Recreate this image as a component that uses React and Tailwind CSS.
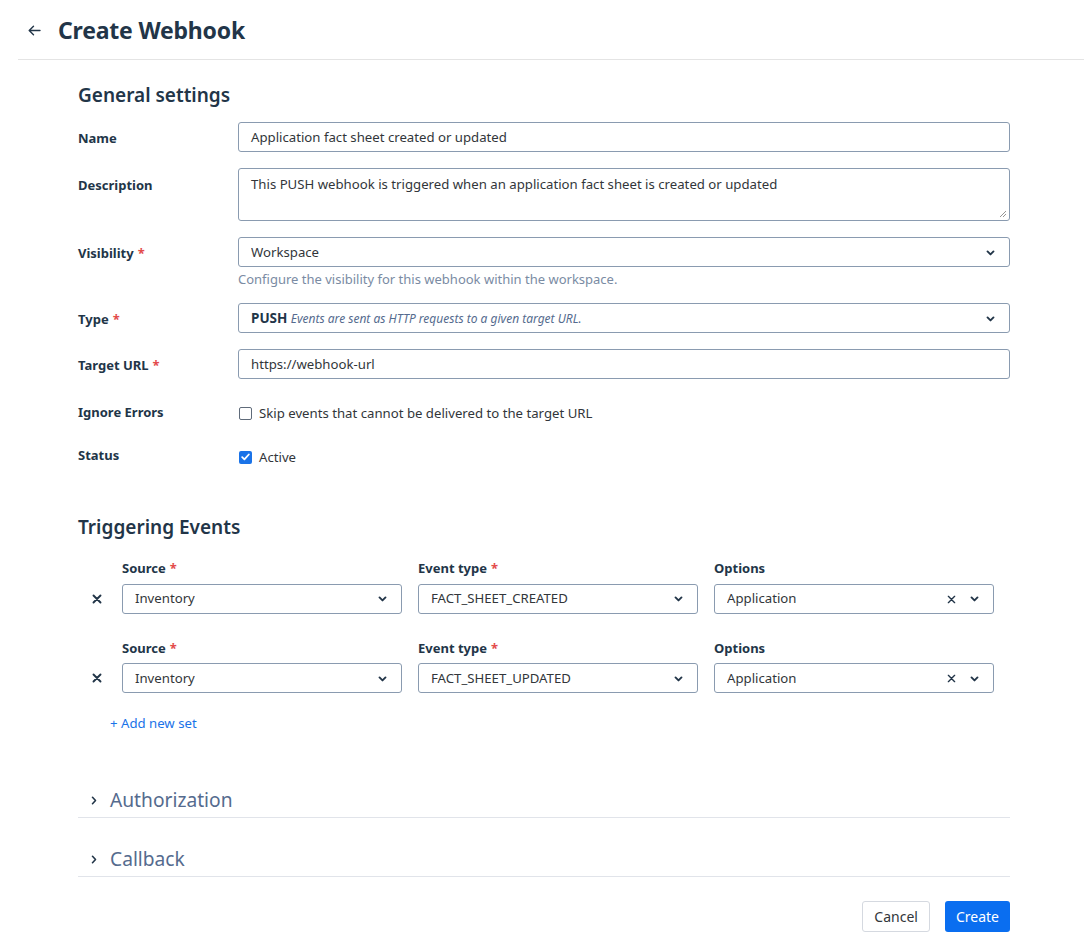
import React from 'react'

const Chevron = ({ className = '' }) => (
  <svg width="9" height="6" viewBox="0 0 9 6" className={className}>
    <path d="M1.5 1.4 4.5 4.4 7.5 1.4" fill="none" stroke="#223548" strokeWidth="1.9" strokeLinecap="round" strokeLinejoin="round" />
  </svg>
)

const Cross = ({ size = 10, width = 1.8 }) => (
  <svg width={size} height={size} viewBox="0 0 10 10">
    <path d="M1.5 1.5 8.5 8.5 M8.5 1.5 1.5 8.5" stroke="#223548" strokeWidth={width} strokeLinecap="round" />
  </svg>
)

const Req = () => <span className="text-[#e34b4b] ml-[4px]">*</span>

const Label = ({ children, required, className = 'pt-[7px]' }) => (
  <div className={`w-[160px] shrink-0 text-[13px] font-bold text-[#223548] ${className}`}>
    {children}
    {required && <Req />}
  </div>
)

const boxCls =
  'h-[30px] border border-[#8a9bb0] rounded-[3px] bg-white flex items-center px-[12px] pt-[1px] text-[13.2px] text-[#32363a]'

const Select = ({ children, className = '', clear }) => (
  <div className={`${boxCls} justify-between ${className}`}>
    <div className="truncate">{children}</div>
    <div className="flex items-center gap-[14px] pr-[2px]">
      {clear && <Cross size={9} width={1.5} />}
      <Chevron />
    </div>
  </div>
)

const EventSet = ({ eventType, first }) => (
  <div className={first ? '' : 'mt-[25px]'}>
    <div className="flex gap-[16px] pl-[44px] text-[13px] font-bold text-[#223548] mb-[5px]">
      <div className="w-[280px]">
        Source<Req />
      </div>
      <div className="w-[280px]">
        Event type<Req />
      </div>
      <div className="w-[280px]">Options</div>
    </div>
    <div className="flex items-center">
      <div className="w-[44px] flex justify-center pr-[6px]">
        <Cross size={10} width={1.9} />
      </div>
      <div className="flex gap-[16px]">
        <Select className="w-[280px]">Inventory</Select>
        <Select className="w-[280px]">{eventType}</Select>
        <Select className="w-[280px]" clear>Application</Select>
      </div>
    </div>
  </div>
)

const Collapsible = ({ title }) => (
  <div className="h-[59px] border-b border-[#e1e4ea] flex items-end pb-[2px]">
    <div className="flex items-center">
      <div className="w-[32px] flex justify-center">
        <svg width="6" height="9" viewBox="0 0 6 9">
          <path d="M1.5 1.3 4.5 4.5 1.5 7.7" fill="none" stroke="#223548" strokeWidth="1.6" strokeLinecap="round" strokeLinejoin="round" />
        </svg>
      </div>
      <span className="text-[19.2px] text-[#556b8e]">{title}</span>
    </div>
  </div>
)

export default function App() {
  return (
    <div className="min-h-screen bg-white font-['Noto_Sans',sans-serif] text-[#223548]">
      <header className="ml-[18px] h-[60px] border-b border-[#e4e4e4] flex items-center pt-[4px]">
        <div className="w-[40px] flex justify-center pr-[8px] pb-[2px]">
          <svg width="13" height="11" viewBox="0 0 13 11">
            <path d="M12 5.5H1.5 M5.5 1.2 1.2 5.5 5.5 9.8" fill="none" stroke="#223548" strokeWidth="1.4" strokeLinecap="round" strokeLinejoin="round" />
          </svg>
        </div>
        <h1 className="text-[23px] font-bold text-[#223548] tracking-[-0.2px] pb-[2px]">Create Webhook</h1>
      </header>

      <main className="ml-[78px] w-[932px]">
        <h2 className="text-[19px] font-semibold mt-[21px] mb-[13px] leading-[28px]">General settings</h2>

        <div className="flex items-start">
          <Label>Name</Label>
          <div className={`${boxCls} flex-1`}>Application fact sheet created or updated</div>
        </div>

        <div className="flex items-start mt-[16px]">
          <Label className="pt-[8px]">Description</Label>
          <div className="flex-1 relative h-[53px] border border-[#8a9bb0] rounded-[3px] px-[12px] pt-[6px] text-[13.2px] text-[#32363a]">
            This PUSH webhook is triggered when an application fact sheet is created or updated
            <svg width="8" height="8" viewBox="0 0 8 8" className="absolute right-[2px] bottom-[2px]">
              <path d="M7 1 1 7 M7 4 4 7" stroke="#8a8a8a" strokeWidth="0.9" />
            </svg>
          </div>
        </div>

        <div className="flex items-start mt-[16px]">
          <Label required>Visibility</Label>
          <Select className="flex-1">Workspace</Select>
        </div>
        <div className="pl-[160px] text-[13px] text-[#7a8ba3] mt-[3px] leading-[18px]">
          Configure the visibility for this webhook within the workspace.
        </div>

        <div className="flex items-start mt-[15px]">
          <Label required>Type</Label>
          <Select className="flex-1">
            <span className="font-bold text-[#223548] text-[13.5px]">PUSH</span>{' '}
            <span className="italic text-[12px] text-[#556b8e]">Events are sent as HTTP requests to a given target URL.</span>
          </Select>
        </div>

        <div className="flex items-start mt-[16px]">
          <Label required>Target URL</Label>
          <div className={`${boxCls} flex-1`}>https://webhook-url</div>
        </div>

        <div className="flex items-center mt-[21px] h-[24px]">
          <Label className="pt-[1px]">Ignore Errors</Label>
          <div className="flex items-center text-[13.2px] text-[#32363a] pt-[3px]">
            <span className="w-[13px] h-[13px] border border-[#5f6b7a] rounded-[2px] ml-[1px] mr-[7px]" />
            Skip events that cannot be delivered to the target URL
          </div>
        </div>

        <div className="flex items-center mt-[20px] h-[24px]">
          <Label className="pt-0">Status</Label>
          <div className="flex items-center text-[13.2px] text-[#32363a] pt-[3px]">
            <span className="w-[13px] h-[13px] rounded-[2px] ml-[1px] mr-[7px] bg-[#1a73e8] flex items-center justify-center">
              <svg width="9" height="8" viewBox="0 0 9 8">
                <path d="M1.2 4.2 3.4 6.3 7.8 1.5" fill="none" stroke="white" strokeWidth="1.8" strokeLinecap="round" strokeLinejoin="round" />
              </svg>
            </span>
            Active
          </div>
        </div>

        <h2 className="text-[19px] font-semibold mt-[45px] mb-[18px] leading-[28px]">Triggering Events</h2>

        <EventSet eventType="FACT_SHEET_CREATED" first />
        <EventSet eventType="FACT_SHEET_UPDATED" />

        <div className="pl-[32px] mt-[21px] text-[13.2px] text-[#1a73e8]">+ Add new set</div>

        <div className="mt-[25px]">
          <Collapsible title="Authorization" />
          <Collapsible title="Callback" />
        </div>

        <div className="flex justify-end gap-[15px] mt-[24px]">
          <button className="h-[31px] px-[11px] border border-[#d5d9e0] rounded-[3px] bg-white text-[14px] text-[#32363a]">
            Cancel
          </button>
          <button className="h-[31px] px-[11px] rounded-[3px] bg-[#0a6ef0] text-[14px] text-white">Create</button>
        </div>
      </main>
    </div>
  )
}
